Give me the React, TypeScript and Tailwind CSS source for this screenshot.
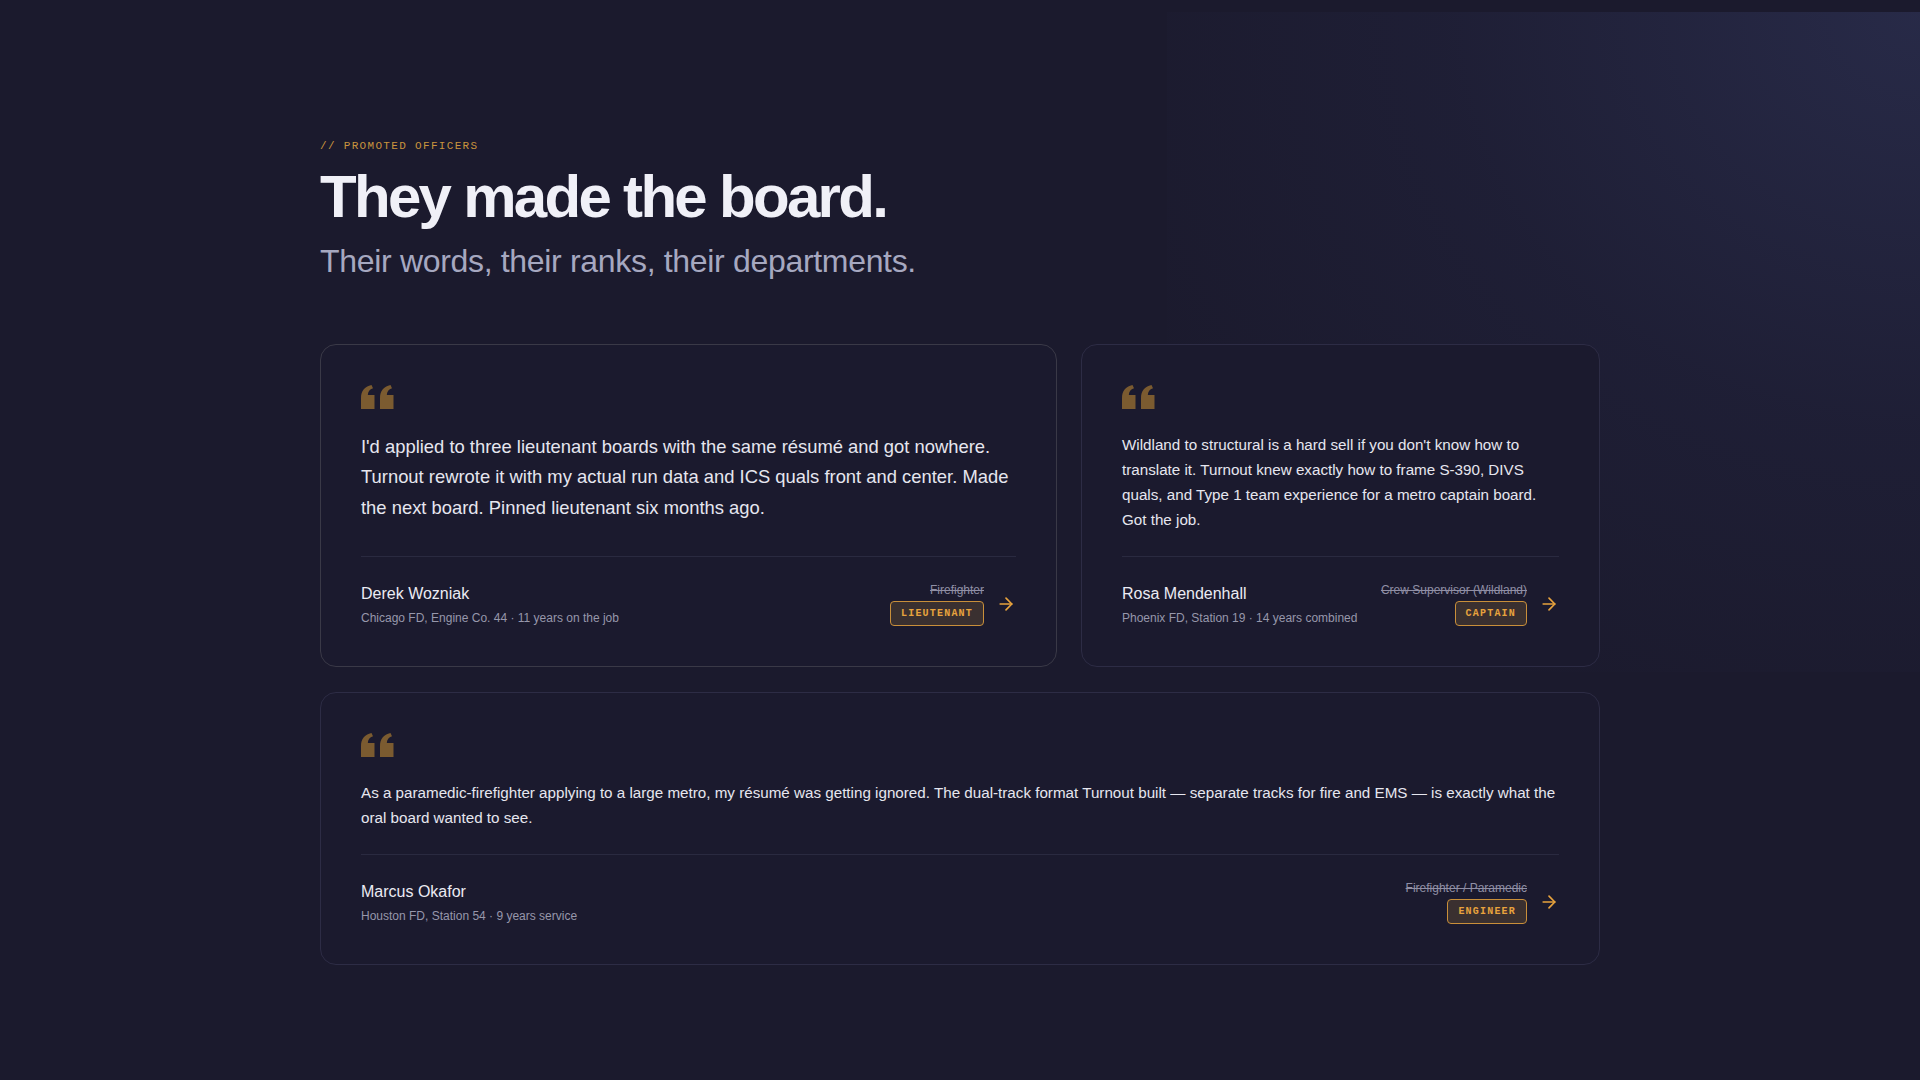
import React from 'react';
import { ArrowRight } from 'lucide-react';

type Testimonial = {
  quote: string;
  name: string;
  meta: string;
  from: string;
  to: string;
};

const featured: Testimonial[] = [
  {
    quote:
      "I'd applied to three lieutenant boards with the same résumé and got nowhere. Turnout rewrote it with my actual run data and ICS quals front and center. Made the next board. Pinned lieutenant six months ago.",
    name: 'Derek Wozniak',
    meta: 'Chicago FD, Engine Co. 44 · 11 years on the job',
    from: 'Firefighter',
    to: 'Lieutenant',
  },
  {
    quote:
      "Wildland to structural is a hard sell if you don't know how to translate it. Turnout knew exactly how to frame S-390, DIVS quals, and Type 1 team experience for a metro captain board. Got the job.",
    name: 'Rosa Mendenhall',
    meta: 'Phoenix FD, Station 19 · 14 years combined',
    from: 'Crew Supervisor (Wildland)',
    to: 'Captain',
  },
];

const wide: Testimonial = {
  quote:
    'As a paramedic-firefighter applying to a large metro, my résumé was getting ignored. The dual-track format Turnout built — separate tracks for fire and EMS — is exactly what the oral board wanted to see.',
  name: 'Marcus Okafor',
  meta: 'Houston FD, Station 54 · 9 years service',
  from: 'Firefighter / Paramedic',
  to: 'Engineer',
};

function QuoteMark() {
  return (
    <svg width="33" height="24" viewBox="0 0 33 24" className="block text-[#7b5b30]" fill="currentColor">
      <path d="M0 24V13C0 6 3.5 1.6 10.5 0L12 3.2C8.6 4.4 7 6.6 6.8 10H13.5V24Z" />
      <path d="M19 24V13C19 6 22.5 1.6 29.5 0L31 3.2C27.6 4.4 26 6.6 25.8 10H32.5V24Z" />
    </svg>
  );
}

function Promotion({ from, to }: { from: string; to: string }) {
  return (
    <div className="flex items-center gap-3">
      <div className="flex flex-col items-end gap-[3px]">
        <span className="text-xs leading-4 text-[#908fa5] line-through">{from}</span>
        <span className="rounded border border-[#c98f3a] bg-[#3a3030] px-2.5 py-[5px] font-['Liberation_Mono',monospace] text-[10px] font-bold uppercase leading-[13px] tracking-[0.12em] text-[#e8a33d]">
          {to}
        </span>
      </div>
      <ArrowRight size={20} strokeWidth={2} className="text-[#e8a33d]" />
    </div>
  );
}

function Card({ t, size, border }: { t: Testimonial; size: 'lg' | 'md'; border: string }) {
  return (
    <article className={`flex flex-col rounded-2xl border bg-[#1b1a2e] p-10 ${border}`}>
      <QuoteMark />
      <p
        className={`mt-[23px] leading-[1.65] text-[#e6e6ef] ${
          size === 'lg' ? 'text-[18.4px]' : 'text-[15.2px]'
        }`}
      >
        {t.quote}
      </p>
      <div className="mt-auto pt-6">
        <div className="flex items-center justify-between border-t border-[#2a2a40] pt-[25px]">
          <div>
            <p className="text-base leading-6 text-[#ebebf3]">{t.name}</p>
            <p className="mt-1 text-xs leading-4 text-[#9797ab]">{t.meta}</p>
          </div>
          <Promotion from={t.from} to={t.to} />
        </div>
      </div>
    </article>
  );
}

export default function App() {
  return (
    <div className="relative min-h-screen overflow-hidden bg-[#1b1a2d] font-['Liberation_Sans',Arial,sans-serif]">
      {/* soft glow in the upper right corner */}
      <div className="pointer-events-none absolute right-0 top-3 h-[660px] w-[753px] bg-[radial-gradient(ellipse_at_top_right,rgba(52,58,98,0.5),rgba(42,46,82,0.22)_45%,transparent_82%)]" />

      <section className="relative mx-auto w-[1280px] pb-24 pt-[138px]">
        <p className="font-['Liberation_Mono',monospace] text-[11px] leading-4 tracking-[0.12em] text-[#c9943d]">
          // PROMOTED OFFICERS
        </p>
        <h1 className="mt-2.5 text-[60px] font-bold leading-[66px] tracking-[-0.045em] text-[#f0f0f7]">
          They made the board.
        </h1>
        <p className="mt-[11px] text-[32px] leading-[40px] tracking-[-0.01em] text-[#a6a8c0]">
          Their words, their ranks, their departments.
        </p>

        <div className="mt-[63px] grid grid-cols-[737px_1fr] gap-6">
          <Card t={featured[0]} size="lg" border="border-[#3a3947]" />
          <Card t={featured[1]} size="md" border="border-[#2d2c45]" />
        </div>

        <div className="mt-[25px]">
          <Card t={wide} size="md" border="border-[#2d2c45]" />
        </div>
      </section>
    </div>
  );
}
